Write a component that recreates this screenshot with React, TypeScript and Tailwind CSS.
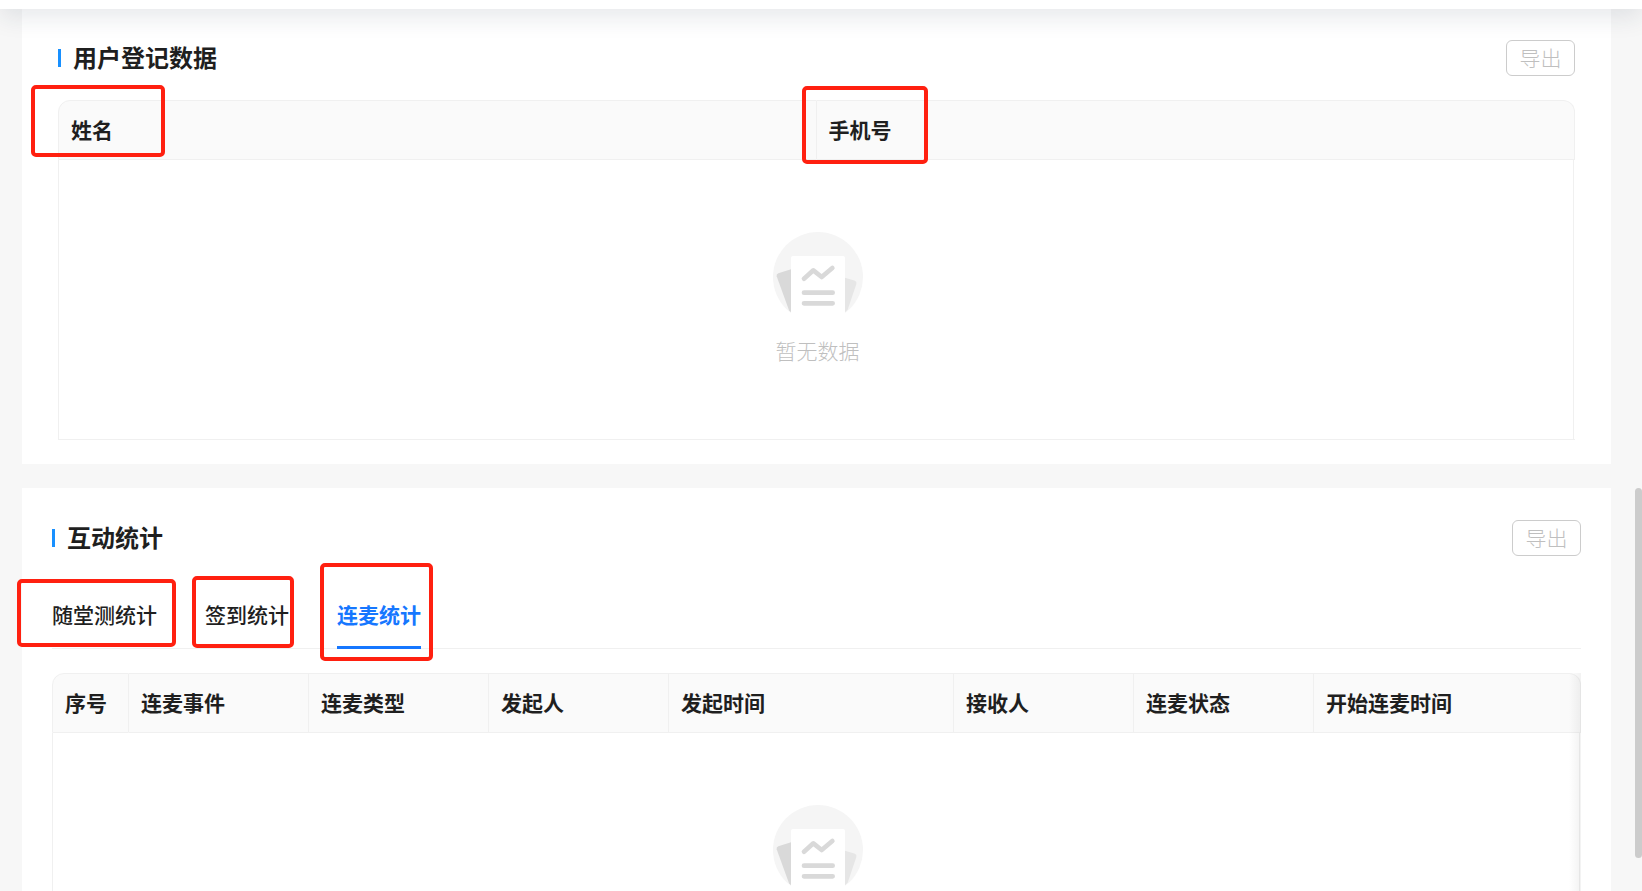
import { useState } from "react";
import type { ReactNode } from "react";

const tabs = ["随堂测统计", "签到统计", "连麦统计"];

const tabMarks = [
    "-left-[35px] -right-[19px] -top-[13px] -bottom-px",
    "-left-[13px] -right-[5px] -top-4 -bottom-0.5",
    "-left-[17px] -right-3 -top-[29px] -bottom-[15px]",
];

const columns = [
    { title: "序号", width: "w-[77px]" },
    { title: "连麦事件", width: "w-[180px]" },
    { title: "连麦类型", width: "w-[180px]" },
    { title: "发起人", width: "w-[180px]" },
    { title: "发起时间", width: "w-[285px]" },
    { title: "接收人", width: "w-[180px]" },
    { title: "连麦状态", width: "w-[180px]" },
    { title: "开始连麦时间", width: "" },
];

// red frame drawn around the fields under review
const Mark = ({ className }: { className: string }) => (
    <span className={`absolute pointer-events-none border-4 border-[#ff2010] rounded-[5px] ${className}`} />
);

const SectionTitle = ({ children }: { children: ReactNode }) => (
    <div className="flex justify-between items-center">
        <h2 className="flex items-center gap-3 text-2xl leading-8 font-bold">
            <span className="w-[3px] h-[18px] bg-[#1890ff]" />
            <span className="pb-0.5">{children}</span>
        </h2>
        <button disabled className="w-[69px] h-9 pb-0.5 border border-[#cccccc] rounded-md text-[21px] leading-8 font-light text-[#bfbfbf]">
            导出
        </button>
    </div>
);

const Empty = () => (
    <div className="flex flex-col items-center gap-3 h-[279px] pt-[72px] pl-[3px]">
        <svg viewBox="0 0 270 270" className="w-[90px] h-[90px]">
            <circle cx="135" cy="135" r="135" fill="#f5f5f5" />
            <path d="M54 112 L16 124 Q9 127 11 133 L48 235 L54 241 Z" fill="#d9d9d9" />
            <path d="M216 137 L246 146 Q252 149 250 156 L224 233 L216 241 Z" fill="#e6e6e6" />
            <path d="M54 270 V78 Q54 72 60 72 H210 Q216 72 216 78 V270 Z" fill="#fff" />
            <path
                d="M93 140 L121 115 L146 135 L178 108 M93 182 H179 M93 214 H179"
                fill="none"
                stroke="#d9d9d9"
                strokeWidth="14"
                strokeLinecap="round"
                strokeLinejoin="round"
            />
        </svg>
        <p className="text-[21px] leading-8 font-light text-[#bfbfbf]">暂无数据</p>
    </div>
);

const App = () => {
    const [activeTab, setActiveTab] = useState("连麦统计");

    return (
        <div className="relative h-screen overflow-hidden flex flex-col bg-[#f7f7f7] text-[#1f1f1f] font-['Noto_Sans_CJK_SC',sans-serif]">
            <header className="relative z-10 shrink-0 h-16 -mt-[55px] bg-white shadow-[0_8px_24px_0_rgba(25,42,70,0.11)]" />

            <main className="flex-1 min-h-0 overflow-hidden flex flex-col gap-6 pl-[22px] pr-[31px]">
                <section className="shrink-0 bg-white px-9 pt-[31px] pb-6">
                    <SectionTitle>用户登记数据</SectionTitle>

                    <table className="w-full mt-6 table-fixed border-separate border-spacing-0 text-[21px] leading-8 text-left">
                        <thead>
                            <tr className="h-[60px]">
                                <th className="relative bg-[#fafafa] border border-[#f0f0f0] rounded-tl-xl pl-3 pb-0.5 font-bold">
                                    姓名
                                    <Mark className="-left-7 -top-4 w-[134px] h-[72px]" />
                                </th>
                                <th className="relative bg-[#fafafa] border border-l-0 border-[#f0f0f0] rounded-tr-xl pl-3 pb-0.5 font-bold">
                                    手机号
                                    <Mark className="-left-[15px] -top-[15px] w-[126px] h-[78px]" />
                                </th>
                            </tr>
                        </thead>
                        <tbody>
                            <tr>
                                <td colSpan={2} className="border-l border-b border-[#f0f0f0] p-0">
                                    <div className="mr-px border-r border-[#f0f0f0]">
                                        <Empty />
                                    </div>
                                </td>
                            </tr>
                        </tbody>
                    </table>
                </section>

                <section className="shrink-0 bg-white px-[30px] pt-8">
                    <SectionTitle>互动统计</SectionTitle>

                    <nav role="tablist" className="flex gap-12 mt-9 border-b border-[#f0f0f0]">
                        {tabs.map((tab, i) => (
                            <button
                                key={tab}
                                role="tab"
                                aria-selected={activeTab === tab}
                                onClick={() => setActiveTab(tab)}
                                className={`relative -mb-px pt-1.5 pb-4 border-b-[3px] text-[21px] leading-8 ${
                                    activeTab === tab ? "border-[#1677ff] text-[#1677ff] font-bold" : "border-transparent font-medium"
                                }`}
                            >
                                {tab}
                                <Mark className={tabMarks[i]} />
                            </button>
                        ))}
                    </nav>

                    <div className="relative mt-6 overflow-hidden">
                        <table className="w-full table-fixed border-separate border-spacing-0 text-[21px] leading-8 text-left">
                            <thead>
                                <tr className="h-[60px]">
                                    {columns.map((col) => (
                                        <th
                                            key={col.title}
                                            className={`bg-[#fafafa] border-y border-r border-[#f0f0f0] pl-3 pb-0.5 font-bold first:border-l first:rounded-tl-xl last:rounded-tr-xl ${col.width}`}
                                        >
                                            {col.title}
                                        </th>
                                    ))}
                                </tr>
                            </thead>
                            <tbody>
                                <tr>
                                    <td colSpan={columns.length} className="border-l border-b border-[#f0f0f0] p-0">
                                        <div className="mr-px border-r border-[#f0f0f0]">
                                            <Empty />
                                        </div>
                                    </td>
                                </tr>
                            </tbody>
                        </table>
                        {/* more columns to the right */}
                        <div className="absolute inset-y-0 right-0 w-3 bg-linear-to-l from-black/5 to-transparent" />
                    </div>
                </section>
            </main>

            <div className="absolute right-0 top-[488px] w-[7px] h-[370px] rounded-full bg-[#cccccc]" />
        </div>
    );
};

export default App;
